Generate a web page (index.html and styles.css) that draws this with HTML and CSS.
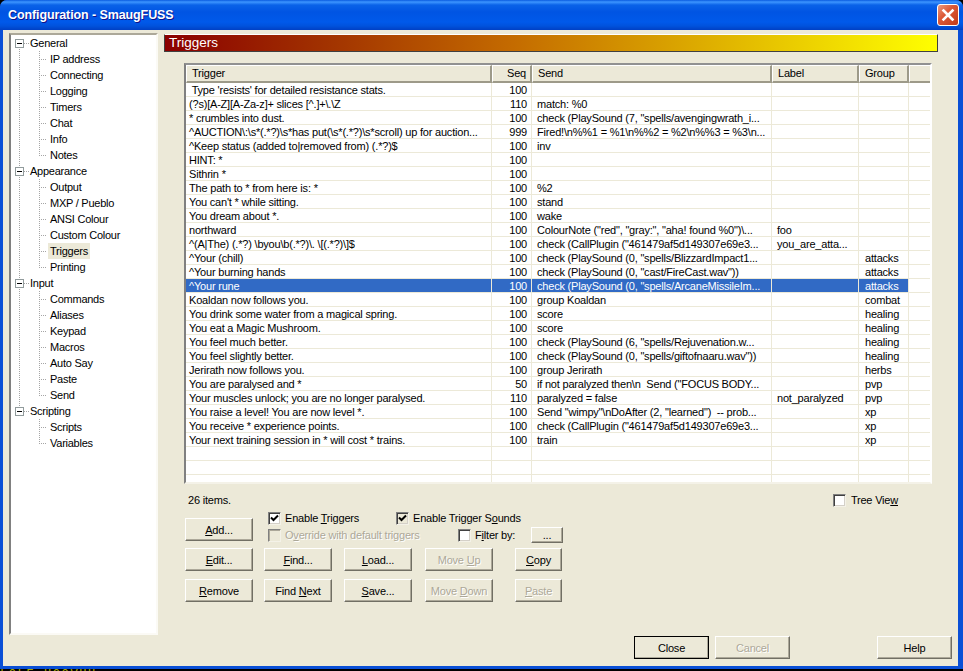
FILE: index.html
```html
<!DOCTYPE html>
<html lang="en">
  <head>
    <meta charset="UTF-8" />
    <meta name="viewport" content="width=device-width, initial-scale=1.0" />
    <title>Configuration - SmaugFUSS</title>
    <link rel="stylesheet" href="styles.css">
  </head>
  <body>
    <div class="window">
      <div class="titlebar">
        <span class="title">Configuration - SmaugFUSS</span>
        <span class="close-x">
          <svg width="20" height="20" viewBox="0 0 20 20">
            <path d="M5.5 5.5 L14.5 14.5 M14.5 5.5 L5.5 14.5" stroke="#fff" stroke-width="2.6" stroke-linecap="square" />
          </svg>
        </span>
      </div>
      <div class="client">
        <div class="top">
          <div class="tree">
            <div class="node root start"><span class="box"></span><span class="name">General</span></div>
            <div class="node leaf"><span class="name">IP address</span></div>
            <div class="node leaf"><span class="name">Connecting</span></div>
            <div class="node leaf"><span class="name">Logging</span></div>
            <div class="node leaf"><span class="name">Timers</span></div>
            <div class="node leaf"><span class="name">Chat</span></div>
            <div class="node leaf"><span class="name">Info</span></div>
            <div class="node leaf last"><span class="name">Notes</span></div>
            <div class="node root"><span class="box"></span><span class="name">Appearance</span></div>
            <div class="node leaf"><span class="name">Output</span></div>
            <div class="node leaf"><span class="name">MXP / Pueblo</span></div>
            <div class="node leaf"><span class="name">ANSI Colour</span></div>
            <div class="node leaf"><span class="name">Custom Colour</span></div>
            <div class="node leaf"><span class="name current">Triggers</span></div>
            <div class="node leaf last"><span class="name">Printing</span></div>
            <div class="node root"><span class="box"></span><span class="name">Input</span></div>
            <div class="node leaf"><span class="name">Commands</span></div>
            <div class="node leaf"><span class="name">Aliases</span></div>
            <div class="node leaf"><span class="name">Keypad</span></div>
            <div class="node leaf"><span class="name">Macros</span></div>
            <div class="node leaf"><span class="name">Auto Say</span></div>
            <div class="node leaf"><span class="name">Paste</span></div>
            <div class="node leaf last"><span class="name">Send</span></div>
            <div class="node root end"><span class="box"></span><span class="name">Scripting</span></div>
            <div class="node leaf tail"><span class="name">Scripts</span></div>
            <div class="node leaf tail last"><span class="name">Variables</span></div>
          </div>
          <div class="page">
            <div class="banner">Triggers</div>
            <div class="listbox">
              <table class="list">
                <colgroup>
                  <col class="c-trigger"><col class="c-seq"><col class="c-send"><col class="c-label"><col class="c-group"><col>
                </colgroup>
                <thead>
                  <tr><th>Trigger</th><th class="num">Seq</th><th>Send</th><th>Label</th><th>Group</th><th></th></tr>
                </thead>
                <tbody>
                  <tr><td> Type 'resists' for detailed resistance stats.</td><td class="num">100</td><td></td><td></td><td></td><td></td></tr>
                  <tr><td>(?s)[A-Z][A-Za-z]+ slices [^.]+\.\Z</td><td class="num">110</td><td>match: %0</td><td></td><td></td><td></td></tr>
                  <tr><td>* crumbles into dust.</td><td class="num">100</td><td>check (PlaySound (7, "spells/avengingwrath_i...</td><td></td><td></td><td></td></tr>
                  <tr><td>^AUCTION\:\s*(.*?)\s*has put(\s*(.*?)\s*scroll) up for auction...</td><td class="num">999</td><td>Fired!\n%%1 = %1\n%%2 = %2\n%%3 = %3\n...</td><td></td><td></td><td></td></tr>
                  <tr><td>^Keep status (added to|removed from) (.*?)$</td><td class="num">100</td><td>inv</td><td></td><td></td><td></td></tr>
                  <tr><td>HINT: *</td><td class="num">100</td><td></td><td></td><td></td><td></td></tr>
                  <tr><td>Sithrin *</td><td class="num">100</td><td></td><td></td><td></td><td></td></tr>
                  <tr><td>The path to * from here is: *</td><td class="num">100</td><td>%2</td><td></td><td></td><td></td></tr>
                  <tr><td>You can't * while sitting.</td><td class="num">100</td><td>stand</td><td></td><td></td><td></td></tr>
                  <tr><td>You dream about *.</td><td class="num">100</td><td>wake</td><td></td><td></td><td></td></tr>
                  <tr><td>northward</td><td class="num">100</td><td>ColourNote ("red", "gray:", "aha! found %0")\...</td><td>foo</td><td></td><td></td></tr>
                  <tr><td>^(A|The) (.*?) \byou\b(.*?)\. \[(.*?)\]$</td><td class="num">100</td><td>check (CallPlugin ("461479af5d149307e69e3...</td><td>you_are_atta...</td><td></td><td></td></tr>
                  <tr><td>^Your (chill)</td><td class="num">100</td><td>check (PlaySound (0, "spells/BlizzardImpact1...</td><td></td><td>attacks</td><td></td></tr>
                  <tr><td>^Your burning hands</td><td class="num">100</td><td>check (PlaySound (0, "cast/FireCast.wav"))</td><td></td><td>attacks</td><td></td></tr>
                  <tr class="selected"><td>^Your rune</td><td class="num">100</td><td>check (PlaySound (0, "spells/ArcaneMissileIm...</td><td></td><td>attacks</td><td></td></tr>
                  <tr><td>Koaldan now follows you.</td><td class="num">100</td><td>group Koaldan</td><td></td><td>combat</td><td></td></tr>
                  <tr><td>You drink some water from a magical spring.</td><td class="num">100</td><td>score</td><td></td><td>healing</td><td></td></tr>
                  <tr><td>You eat a Magic Mushroom.</td><td class="num">100</td><td>score</td><td></td><td>healing</td><td></td></tr>
                  <tr><td>You feel much better.</td><td class="num">100</td><td>check (PlaySound (6, "spells/Rejuvenation.w...</td><td></td><td>healing</td><td></td></tr>
                  <tr><td>You feel slightly better.</td><td class="num">100</td><td>check (PlaySound (0, "spells/giftofnaaru.wav"))</td><td></td><td>healing</td><td></td></tr>
                  <tr><td>Jerirath now follows you.</td><td class="num">100</td><td>group Jerirath</td><td></td><td>herbs</td><td></td></tr>
                  <tr><td>You are paralysed and *</td><td class="num">50</td><td>if not paralyzed then\n  Send ("FOCUS BODY...</td><td></td><td>pvp</td><td></td></tr>
                  <tr><td>Your muscles unlock; you are no longer paralysed.</td><td class="num">110</td><td>paralyzed = false</td><td>not_paralyzed</td><td>pvp</td><td></td></tr>
                  <tr><td>You raise a level! You are now level *.</td><td class="num">100</td><td>Send "wimpy"\nDoAfter (2, "learned")  -- prob...</td><td></td><td>xp</td><td></td></tr>
                  <tr><td>You receive * experience points.</td><td class="num">100</td><td>check (CallPlugin ("461479af5d149307e69e3...</td><td></td><td>xp</td><td></td></tr>
                  <tr><td>Your next training session in * will cost * trains.</td><td class="num">100</td><td>train</td><td></td><td>xp</td><td></td></tr>
                  <tr><td></td><td></td><td></td><td></td><td></td><td></td></tr>
                  <tr><td></td><td></td><td></td><td></td><td></td><td></td></tr>
                  <tr><td></td><td></td><td></td><td></td><td></td><td></td></tr>
                </tbody>
              </table>
            </div>
            <div class="info-row">
              <span>26 items.</span>
              <label class="check tree-view"><span class="tick"></span><span>Tree Vie<u>w</u></span></label>
            </div>
            <div class="controls">
              <div class="control-row first">
                <button class="btn"><u>A</u>dd...</button>
                <div class="options">
                  <div class="option-line">
                    <label class="check opt-a">
                      <span class="tick"><svg width="11" height="11" viewBox="0 0 11 11"><path d="M2 4.5 L4.5 7 L9 2.5" fill="none" stroke="#000" stroke-width="2" /></svg></span>
                      <span>Enable <u>T</u>riggers</span>
                    </label>
                    <label class="check">
                      <span class="tick beige"><svg width="11" height="11" viewBox="0 0 11 11"><path d="M2 4.5 L4.5 7 L9 2.5" fill="none" stroke="#000" stroke-width="2" /></svg></span>
                      <span>Enable Trigger S<u>o</u>unds</span>
                    </label>
                  </div>
                  <div class="option-line second">
                    <label class="check opt-b disabled"><span class="tick"></span><span>O<u>v</u>erride with default triggers</span></label>
                    <label class="check opt-c"><span class="tick"></span><span>F<u>i</u>lter by:</span></label>
                    <button class="btn small">...</button>
                  </div>
                </div>
              </div>
              <div class="control-row">
                <button class="btn"><u>E</u>dit...</button>
                <button class="btn"><u>F</u>ind...</button>
                <button class="btn"><u>L</u>oad...</button>
                <button class="btn disabled">Move <u>U</u>p</button>
                <button class="btn narrow"><u>C</u>opy</button>
              </div>
              <div class="control-row">
                <button class="btn"><u>R</u>emove</button>
                <button class="btn">Find <u>N</u>ext</button>
                <button class="btn"><u>S</u>ave...</button>
                <button class="btn disabled">Move <u>D</u>own</button>
                <button class="btn narrow disabled"><u>P</u>aste</button>
              </div>
            </div>
          </div>
        </div>
        <div class="footer">
          <button class="btn wide default">Close</button>
          <button class="btn wide disabled">Cancel</button>
          <button class="btn wide help">Help</button>
        </div>
      </div>
    </div>
    <div class="behind">LOLE HOOVHH</div>
  </body>
</html>
```

FILE: styles.css
```css
* {
  margin: 0;
  padding: 0;
  box-sizing: border-box;
}
html, body {
  height: 671px;
  overflow: hidden;
}
body {
  --dots-v: repeating-linear-gradient(#a5a5a5 0 1px, transparent 1px 2px);
  --dots-h: repeating-linear-gradient(90deg, #a5a5a5 0 1px, transparent 1px 2px);
  background-color: #000;
  font-family: "Liberation Sans", Arial, sans-serif;
  font-size: 11px;
  letter-spacing: -0.2px;
  color: #000;
}
u {
  text-underline-offset: 1px;
}

/* window frame */
.window {
  display: flex;
  flex-direction: column;
  width: 963px;
  height: 669px;
  padding: 0 5px 3px 3px;
  background-color: #0a4fd6;
  border-radius: 7px 7px 0 0;
}
.titlebar {
  display: flex;
  align-items: center;
  justify-content: space-between;
  flex: none;
  height: 30px;
  margin: 0 -5px 0 -3px;
  padding: 0 4px 0 8px;
  border-radius: 7px 7px 0 0;
  background: linear-gradient(#0a5be0 0, #3d95ff 2px, #0a62e8 5px, #0054e3 12px, #0059ea 22px, #0052dc 26px, #0040c4 30px);
}
.title {
  color: #fff;
  font-size: 12.5px;
  font-weight: bold;
  letter-spacing: -0.1px;
  text-shadow: 1px 1px 0 #0f1089;
}
.close-x {
  display: block;
  width: 22px;
  height: 22px;
  border: 1px solid #fff;
  border-radius: 3px;
  background: linear-gradient(135deg, #ea9a80, #dc5a38 40%, #c23a18);
}
.close-x svg {
  display: block;
}
.client {
  display: flex;
  flex-direction: column;
  flex: 1;
  min-height: 0;
  padding: 3px 0 0 6px;
  background-color: #ece9d8;
}
.top {
  display: flex;
  flex: none;
  height: 602px;
}

/* tree */
.tree {
  flex: none;
  width: 149px;
  letter-spacing: -0.25px;
  border-left: 2px solid #808080;
  border-top: 2px solid #aca899;
  border-right: 2px solid #fbfaf5;
  border-bottom: 2px solid #fbfaf5;
  background-color: #fff;
}
.node {
  display: flex;
  align-items: center;
  height: 16px;
  white-space: nowrap;
  background-repeat: no-repeat;
}
.root {
  padding-left: 4px;
  background-image: var(--dots-v), var(--dots-h);
  background-size: 1px 16px, 6px 1px;
  background-position: 8px 0, 13px 8px;
}
.root.start {
  background-size: 1px 8px, 6px 1px;
  background-position: 8px 8px, 13px 8px;
}
.root.end {
  background-size: 1px 8px, 6px 1px;
}
.box {
  flex: none;
  width: 9px;
  height: 9px;
  margin-right: 6px;
  border: 1px solid #919b9c;
  background: linear-gradient(#000, #000) center / 5px 1px no-repeat, #fff;
}
.leaf {
  padding-left: 37px;
  background-image: var(--dots-v), var(--dots-v), var(--dots-h);
  background-size: 1px 16px, 1px 16px, 8px 1px;
  background-position: 8px 0, 28px 0, 28px 8px;
}
.leaf.last {
  background-size: 1px 16px, 1px 9px, 8px 1px;
}
.leaf.tail {
  background-size: 0 0, 1px 16px, 8px 1px;
}
.leaf.tail.last {
  background-size: 0 0, 1px 9px, 8px 1px;
}
.leaf .name {
  padding: 0 2px;
  line-height: 16px;
}
.leaf .current {
  background-color: #ece9d8;
}

/* right side */
.page {
  display: flex;
  flex-direction: column;
  flex: none;
  width: 774px;
  margin-left: 6px;
  padding-top: 1px;
}
.banner {
  flex: none;
  height: 18px;
  padding-left: 4px;
  line-height: 16px;
  font-size: 13.5px;
  letter-spacing: 0;
  color: #fff;
  border-top: 1px solid #fff;
  border-right: 1px solid #404040;
  border-bottom: 1px solid #404040;
  border-left: 1px solid #404040;
  background: linear-gradient(90deg, #8b0000, #a03000 20%, #c46b00 45%, #d8a000 65%, #ffff00);
}
.listbox {
  flex: none;
  width: 748px;
  height: 421px;
  margin: 11px 0 0 20px;
  overflow: hidden;
  border-top: 2px solid #919191;
  border-left: 2px solid #808080;
  border-right: 2px solid #fff;
  border-bottom: 2px solid #f4f2e8;
  background-color: #fff;
}
.list {
  width: 745px;
  table-layout: fixed;
  border-collapse: separate;
  border-spacing: 0;
}
.c-trigger { width: 306px; }
.c-seq { width: 40px; }
.c-send { width: 240px; }
.c-label { width: 87px; }
.c-group { width: 50px; }
.list th {
  height: 18px;
  padding: 0 5px 1px;
  font-weight: normal;
  text-align: left;
  white-space: nowrap;
  background-color: #ece9d8;
  border-top: 1px solid #fff;
  border-left: 1px solid #fff;
  border-right: 2px solid #9d9a89;
  border-bottom: 2px solid #9d9a89;
}
.list th:last-child {
  border-right: none;
}
.list td {
  height: 14px;
  padding: 1px 5px 0;
  line-height: 12px;
  white-space: pre;
  overflow: hidden;
  border-right: 1px solid #ece9d8;
  border-bottom: 1px solid #ece9d8;
}
.list td:first-child {
  padding-left: 3px;
}
.list td:nth-child(5) {
  padding-left: 6px;
}
.list .num,
.list th.num {
  padding-right: 4px;
  padding-left: 0;
  text-align: right;
}
.selected td {
  color: #fff;
  background-color: #316ac5;
}
.selected td:last-child {
  background-color: #fff;
}

/* below the list */
.info-row {
  display: flex;
  align-items: center;
  justify-content: space-between;
  height: 14px;
  margin-top: 9px;
  padding: 0 40px 0 24px;
}
.controls {
  display: flex;
  flex-direction: column;
  padding-left: 21px;
}
.control-row {
  display: flex;
  gap: 11px;
  margin-top: 7px;
}
.control-row:last-child {
  margin-top: 8px;
}
.control-row .btn:nth-child(3) {
  margin-left: 1px;
}
.control-row .btn:nth-child(4) {
  margin-left: 2px;
}
.control-row.first {
  gap: 15px;
  align-items: flex-end;
  height: 30px;
  margin-top: 4px;
}
.options {
  flex: 1;
  align-self: flex-start;
}
.option-line {
  display: flex;
  align-items: center;
  height: 14px;
}
.option-line.second {
  height: 16px;
  margin-top: 2px;
}
.opt-a { width: 128px; }
.opt-b { width: 190px; }
.opt-c { width: 72px; gap: 5px; }
.check {
  display: flex;
  align-items: center;
  gap: 4px;
}
.tick {
  display: block;
  flex: none;
  width: 13px;
  height: 13px;
  border-top: 1px solid #808080;
  border-left: 1px solid #808080;
  border-right: 1px solid #f4f2e8;
  border-bottom: 1px solid #f4f2e8;
  box-shadow: inset 1px 1px 0 #404040, inset -1px -1px 0 #d4d0c8;
  background-color: #fff;
}
.tick svg {
  display: block;
}
.tick.beige {
  background-color: #ece9d8;
}
.check.disabled {
  color: #aca899;
  text-shadow: 1px 1px 0 #fff;
}
.check.disabled .tick {
  background-color: #ece9d8;
  box-shadow: inset 1px 1px 0 #aca899;
}
.check.tree-view {
  gap: 5px;
}

/* buttons */
.btn {
  flex: none;
  width: 68px;
  height: 23px;
  font: inherit;
  letter-spacing: inherit;
  color: #000;
  background-color: #ece9d8;
  border: 1px solid;
  border-color: #fff #716f64 #716f64 #fff;
  box-shadow: inset -1px -1px 0 #aca899;
}
.btn.narrow {
  width: 47px;
  margin-left: 11px;
}
.btn.small {
  width: 32px;
  height: 16px;
  line-height: 12px;
}
.btn.disabled {
  color: #aca899;
  text-shadow: 1px 1px 0 #fff;
}
.footer {
  display: flex;
  gap: 6px;
  flex: none;
  margin-top: 1px;
  padding-left: 625px;
}
.btn.wide {
  width: 75px;
}
.btn.default {
  outline: 1px solid #000;
  outline-offset: -1px;
}
.btn.help {
  margin-left: 81px;
}

/* what is behind the dialog */
.behind {
  height: 2px;
  overflow: hidden;
  line-height: 12px;
  font-family: "Liberation Mono", monospace;
  font-size: 12px;
  letter-spacing: 1.6px;
  color: #a8a800;
}
```
